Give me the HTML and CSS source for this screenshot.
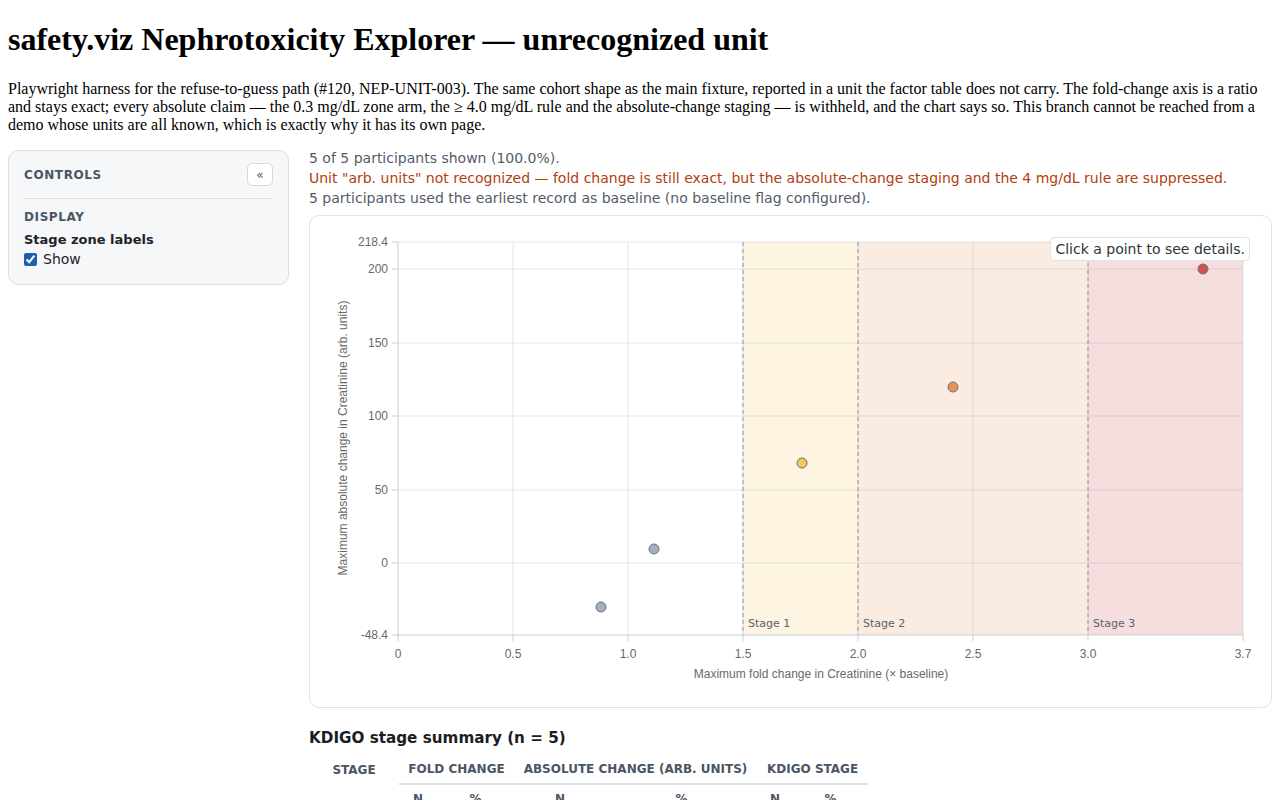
FILE: index.html
```html
<!DOCTYPE html>
<html lang="en">
<head>
    <meta charset="UTF-8">
    <meta name="viewport" content="width=device-width, initial-scale=1.0">
    <title>safety.viz Nephrotoxicity Explorer — unrecognized unit</title>
    <link rel="stylesheet" href="styles.css">
</head>
<body>
    <h1>safety.viz Nephrotoxicity Explorer — unrecognized unit</h1>
    <p>Playwright harness for the refuse-to-guess path (#120, NEP-UNIT-003). The same cohort shape as the main fixture, reported in a unit the factor table does not carry. The fold-change axis is a ratio and stays exact; every absolute claim — the 0.3 mg/dL zone arm, the ≥ 4.0 mg/dL rule and the absolute-change staging — is withheld, and the chart says so. This branch cannot be reached from a demo whose units are all known, which is exactly why it has its own page.</p>

    <div class="app">
        <aside class="controls">
            <div class="controls-head">
                <span class="section-title">Controls</span>
                <button class="collapse" title="Collapse">«</button>
            </div>
            <div class="group">
                <div class="section-title">Display</div>
                <div class="field-label">Stage zone labels</div>
                <label class="check"><input type="checkbox" checked> Show</label>
            </div>
        </aside>

        <main class="main">
            <div class="status">
                <div>5 of 5 participants shown (100.0%).</div>
                <div class="warn">Unit "arb. units" not recognized — fold change is still exact, but the absolute-change staging and the 4 mg/dL rule are suppressed.</div>
                <div>5 participants used the earliest record as baseline (no baseline flag configured).</div>
            </div>

            <div class="chart-card">
                <svg class="chart" width="961" height="491" viewBox="0 0 961 491">
                    <!-- stage zones -->
                    <rect class="zone-1" x="433" y="26" width="115" height="393"/>
                    <rect class="zone-2" x="548" y="26" width="230" height="393"/>
                    <rect class="zone-3" x="778" y="26" width="155" height="393"/>

                    <!-- grid -->
                    <g class="grid">
                        <line x1="203" y1="26" x2="203" y2="419"/>
                        <line x1="318" y1="26" x2="318" y2="419"/>
                        <line x1="433" y1="26" x2="433" y2="419"/>
                        <line x1="548" y1="26" x2="548" y2="419"/>
                        <line x1="663" y1="26" x2="663" y2="419"/>
                        <line x1="778" y1="26" x2="778" y2="419"/>
                        <line x1="933" y1="26" x2="933" y2="419"/>
                        <line x1="88" y1="26" x2="933" y2="26"/>
                        <line x1="88" y1="53" x2="933" y2="53"/>
                        <line x1="88" y1="127" x2="933" y2="127"/>
                        <line x1="88" y1="200" x2="933" y2="200"/>
                        <line x1="88" y1="274" x2="933" y2="274"/>
                        <line x1="88" y1="347" x2="933" y2="347"/>
                    </g>

                    <!-- stage thresholds -->
                    <g class="threshold">
                        <line x1="433" y1="26" x2="433" y2="419"/>
                        <line x1="548" y1="26" x2="548" y2="419"/>
                        <line x1="778" y1="26" x2="778" y2="419"/>
                    </g>
                    <g class="zone-label">
                        <text x="438" y="411">Stage 1</text>
                        <text x="553" y="411">Stage 2</text>
                        <text x="783" y="411">Stage 3</text>
                    </g>

                    <!-- axes -->
                    <g class="axis">
                        <line x1="88" y1="26" x2="88" y2="419"/>
                        <line x1="88" y1="419" x2="933" y2="419"/>
                        <line x1="82" y1="26" x2="88" y2="26"/>
                        <line x1="82" y1="53" x2="88" y2="53"/>
                        <line x1="82" y1="127" x2="88" y2="127"/>
                        <line x1="82" y1="200" x2="88" y2="200"/>
                        <line x1="82" y1="274" x2="88" y2="274"/>
                        <line x1="82" y1="347" x2="88" y2="347"/>
                        <line x1="82" y1="419" x2="88" y2="419"/>
                        <line x1="88" y1="419" x2="88" y2="425"/>
                        <line x1="203" y1="419" x2="203" y2="425"/>
                        <line x1="318" y1="419" x2="318" y2="425"/>
                        <line x1="433" y1="419" x2="433" y2="425"/>
                        <line x1="548" y1="419" x2="548" y2="425"/>
                        <line x1="663" y1="419" x2="663" y2="425"/>
                        <line x1="778" y1="419" x2="778" y2="425"/>
                        <line x1="933" y1="419" x2="933" y2="425"/>
                    </g>
                    <g class="tick y-tick">
                        <text x="78" y="30">218.4</text>
                        <text x="78" y="57">200</text>
                        <text x="78" y="131">150</text>
                        <text x="78" y="204">100</text>
                        <text x="78" y="278">50</text>
                        <text x="78" y="351">0</text>
                        <text x="78" y="423">-48.4</text>
                    </g>
                    <g class="tick x-tick">
                        <text x="88" y="442">0</text>
                        <text x="203" y="442">0.5</text>
                        <text x="318" y="442">1.0</text>
                        <text x="433" y="442">1.5</text>
                        <text x="548" y="442">2.0</text>
                        <text x="663" y="442">2.5</text>
                        <text x="778" y="442">3.0</text>
                        <text x="933" y="442">3.7</text>
                    </g>
                    <text class="axis-title" x="511" y="462">Maximum fold change in Creatinine (× baseline)</text>
                    <text class="axis-title" transform="translate(37 222) rotate(-90)">Maximum absolute change in Creatinine (arb. units)</text>

                    <!-- participants -->
                    <g class="points">
                        <circle class="pt-0" cx="291" cy="391" r="5"/>
                        <circle class="pt-0" cx="344" cy="333" r="5"/>
                        <circle class="pt-1" cx="492" cy="247" r="5"/>
                        <circle class="pt-2" cx="643" cy="171" r="5"/>
                        <circle class="pt-3" cx="893" cy="53" r="5"/>
                    </g>
                </svg>
                <div class="hint">Click a point to see details.</div>
            </div>

            <h3 class="summary-title">KDIGO stage summary (n = 5)</h3>
            <table class="summary">
                <colgroup>
                    <col class="c-stage">
                    <col class="c-n1"><col class="c-p1">
                    <col class="c-n2"><col class="c-p2">
                    <col class="c-n3"><col class="c-p3">
                </colgroup>
                <thead>
                    <tr>
                        <th>Stage</th>
                        <th colspan="2" class="group-head">Fold change</th>
                        <th colspan="2" class="group-head">Absolute change (arb. units)</th>
                        <th colspan="2" class="group-head">KDIGO stage</th>
                    </tr>
                    <tr>
                        <th></th>
                        <th>N</th><th>%</th>
                        <th>N</th><th>%</th>
                        <th>N</th><th>%</th>
                    </tr>
                </thead>
                <tbody>
                    <tr><td>No AKI</td><td>2</td><td>40.0</td><td>—</td><td>—</td><td>2</td><td>40.0</td></tr>
                    <tr><td>Stage 1</td><td>1</td><td>20.0</td><td>—</td><td>—</td><td>1</td><td>20.0</td></tr>
                    <tr><td>Stage 2</td><td>1</td><td>20.0</td><td>—</td><td>—</td><td>1</td><td>20.0</td></tr>
                    <tr><td>Stage 3</td><td>1</td><td>20.0</td><td>—</td><td>—</td><td>1</td><td>20.0</td></tr>
                </tbody>
            </table>
        </main>
    </div>
</body>
</html>
```

FILE: styles.css
```css
body {
    margin: 0 8px 8px;
    font-family: "Liberation Serif", serif;
    color: #000;
    background: #fff;
}
h1 {
    font-size: 32px;
    margin: 21px 0 22px;
}
p {
    font-size: 16px;
    margin: 16px 0;
}

.app {
    display: flex;
    gap: 20px;
    align-items: flex-start;
    font-family: "DejaVu Sans", sans-serif;
}

/* sidebar */
.controls {
    width: 249px;
    flex: none;
    padding: 12px 15px 17px;
    background: #f6f7f9;
    border: 1px solid #dcdfe4;
    border-radius: 10px;
}
.controls-head {
    display: flex;
    justify-content: space-between;
    align-items: center;
    padding-bottom: 12px;
    border-bottom: 1px solid #dde1e6;
}
.section-title {
    font-size: 12px;
    font-weight: bold;
    text-transform: uppercase;
    letter-spacing: 0.05em;
    color: #4a5565;
}
.collapse {
    width: 26px;
    height: 23px;
    padding: 0;
    background: #fff;
    border: 1px solid #d6dae0;
    border-radius: 5px;
    color: #555;
    font-family: "DejaVu Sans", sans-serif;
    font-size: 12px;
    cursor: pointer;
}
.group {
    padding-top: 11px;
}
.field-label {
    margin-top: 8px;
    font-size: 13px;
    font-weight: bold;
    color: #1f2329;
}
.check {
    display: flex;
    align-items: center;
    gap: 6px;
    margin-top: 4px;
    font-size: 14px;
    color: #1f2329;
}
.check input {
    margin: 0;
    width: 13px;
    height: 13px;
    accent-color: #1c5fae;
}

/* main column */
.main {
    flex: 1;
    min-width: 0;
}
.status {
    margin-top: -2px;
    font-size: 14px;
    line-height: 20px;
    color: #525c6b;
}
.warn {
    color: #b33c10;
}

.chart-card {
    position: relative;
    margin-top: 7px;
    width: 961px;
    height: 491px;
    border: 1px solid #dfe2e6;
    border-radius: 10px;
    background: #fff;
}
.chart {
    display: block;
}
.zone-1 { fill: #fdf4e2; }
.zone-2 { fill: #faece0; }
.zone-3 { fill: #f6dede; }
.grid line {
    stroke: rgba(120, 130, 150, 0.2);
    stroke-width: 1;
}
.threshold line {
    stroke: #8d95a3;
    stroke-width: 1;
    stroke-dasharray: 4 3;
}
.axis line {
    stroke: #c9cdd4;
    stroke-width: 1;
}
.zone-label text {
    font-family: "DejaVu Sans", sans-serif;
    font-size: 11px;
    fill: #5a6170;
}
.tick text,
.axis-title {
    font-family: "Liberation Sans", Arial, sans-serif;
    font-size: 12px;
    fill: #666a70;
}
.y-tick text { text-anchor: end; }
.x-tick text { text-anchor: middle; }
.axis-title { text-anchor: middle; }
.points circle {
    stroke: #6b7280;
    stroke-width: 1;
}
.pt-0 { fill: #a6afc1; }
.pt-1 { fill: #f2c75e; }
.pt-2 { fill: #e9935a; }
.pt-3 { fill: #d1514b; }

.hint {
    position: absolute;
    top: 21px;
    right: 21px;
    padding: 3px 4px;
    background: #fff;
    border: 1px solid #dfe2e6;
    border-radius: 4px;
    font-size: 14px;
    line-height: 16px;
    color: #2d333b;
}

/* summary table */
.summary-title {
    margin: 21px 0 8px;
    font-size: 15.2px;
    line-height: 18px;
    color: #1a1d22;
}
.summary {
    table-layout: fixed;
    width: 559px;
    border-collapse: collapse;
    font-size: 13px;
}
.c-stage { width: 90px; }
.c-n1 { width: 38px; }
.c-p1 { width: 77px; }
.c-n2 { width: 92px; }
.c-p2 { width: 151px; }
.c-n3 { width: 36px; }
.c-p3 { width: 75px; }
.summary th {
    padding: 7px 0;
    font-size: 12px;
    font-weight: bold;
    text-transform: uppercase;
    color: #4a5565;
    text-align: center;
    white-space: nowrap;
}
.summary th.group-head {
    border-bottom: 2px solid #dde1e6;
}
.summary td {
    padding: 6px 0;
    text-align: center;
    color: #1f2329;
}
```
